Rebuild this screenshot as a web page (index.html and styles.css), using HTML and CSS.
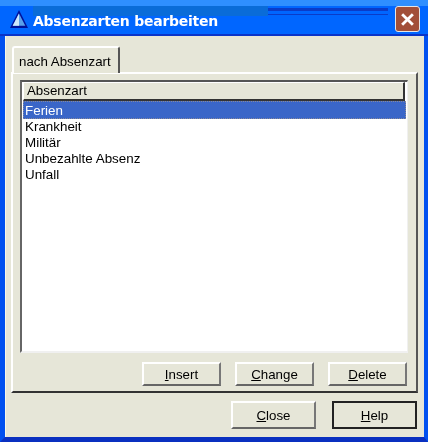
FILE: index.html
```html
<!DOCTYPE html>
<html lang="de">
<head>
<meta charset="utf-8">
<title>Absenzarten bearbeiten</title>
<link rel="stylesheet" href="styles.css">
</head>
<body>
<div class="window">
  <header class="titlebar">
    <svg class="app-icon" viewBox="0 0 20 20" width="18" height="18" aria-hidden="true">
      <path d="M10 0 L20 20 L0 20 Z" fill="#00109a"/>
      <path d="M10 4 L17 17.5 L3 17.5 Z" fill="#5aa0ea"/>
      <path d="M10 4 L10 17.5 L3 17.5 Z" fill="#cfe8fb"/>
    </svg>
    <span class="title">Absenzarten bearbeiten</span>
    <button class="close-x" aria-label="Schliessen">
      <svg viewBox="0 0 14 14" width="15" height="15" aria-hidden="true">
        <path d="M2 2 L12 12 M12 2 L2 12" stroke="#fff" stroke-width="2.6" fill="none"/>
      </svg>
    </button>
  </header>
  <main class="client">
    <div class="tabs"><div class="tab">nach Absenzart</div></div>
    <section class="panel">
      <div class="list">
        <div class="list-head">Absenzart</div>
        <ul class="rows">
          <li class="row selected"><span>Ferien</span></li>
          <li class="row"><span>Krankheit</span></li>
          <li class="row"><span>Militär</span></li>
          <li class="row"><span>Unbezahlte Absenz</span></li>
          <li class="row"><span>Unfall</span></li>
        </ul>
      </div>
      <div class="panel-actions">
        <button class="btn small"><u>I</u>nsert</button>
        <button class="btn small"><u>C</u>hange</button>
        <button class="btn small"><u>D</u>elete</button>
      </div>
    </section>
    <div class="dialog-actions">
      <button class="btn large"><u>C</u>lose</button>
      <button class="btn large default"><u>H</u>elp</button>
    </div>
  </main>
</div>
</body>
</html>
```
FILE: styles.css
```css
* { box-sizing: border-box; }
html, body { margin: 0; padding: 0; }
body { width: 428px; height: 442px; overflow: hidden; background: #0446e6; font-family: "Liberation Sans", Arial, sans-serif; }
.window {
  width: 428px; height: 442px; display: flex; flex-direction: column;
  background: #0066ff;
  border-left: 5px solid #0050f0; border-right: 4px solid #0050f0; border-bottom: 5px solid #0a30c0;
  filter: blur(0.35px);
}
.titlebar {
  height: 36px; flex: none; display: flex; align-items: center;
  margin: 0 -4px 0 -5px; padding: 0 8px 0 10px;
  background:
    linear-gradient(#0a3cc8, #0a3cc8) no-repeat 268px 8px / 120px 3px,
    linear-gradient(#0a3cc8, #0a3cc8) no-repeat 268px 14px / 120px 1px,
    linear-gradient(#0a6cd8, #0a6cd8) no-repeat 33px 6px / 235px 10px,
    linear-gradient(180deg, #2f8fff 0, #2f8fff 6px, #0066ff 6px, #0066ff 34px, #0a34c8 34px, #0a34c8 36px);
}
.app-icon { flex: none; margin-top: 1px; margin-right: 5px; }
.title { flex: 1; color: #fff; font: bold 14px "DejaVu Sans", sans-serif; letter-spacing: -0.25px; margin-top: 6px; }
.close-x {
  width: 25px; height: 26px; padding: 0; margin-top: 2px; display: flex; align-items: center; justify-content: center;
  background: #a24f38; border: 1px solid #e6e6e6; border-radius: 3px;
}
.client {
  flex: 1; display: flex; flex-direction: column; background: #e6e6d8;
  padding: 10px 6px 8px 5px; border-left: 1px solid #f8f8e8;
}
.tabs { height: 26px; padding-left: 1px; display: flex; flex: none; }
.tab {
  width: 108px; height: 27px; padding: 6px 0 0 5px; font-size: 13.3px; color: #000;
  background: #e6e6d8; position: relative; z-index: 1;
  border-top: 2px solid #fff; border-left: 2px solid #fff; border-right: 2px solid #555; border-radius: 3px 3px 0 0;
}
.panel {
  height: 321px; flex: none; display: flex; flex-direction: column; padding: 6px 8px 0 7px;
  border-top: 2px solid #fff; border-left: 2px solid #fff; border-right: 2px solid #555; border-bottom: 2px solid #333;
}
.list {
  height: 273px; flex: none; background: #fff; padding: 0 1px;
  border-top: 2px solid #555; border-left: 2px solid #666; border-right: 1px solid #f0f0f0; border-bottom: 2px solid #f0f0f0;
}
.list-head {
  height: 19px; margin-right: 1px; padding-left: 3px; font-size: 13.3px; line-height: 16px; color: #000; background: #e6e6d8;
  border-top: 1px solid #fff; border-left: 1px solid #fff; border-right: 2px solid #333; border-bottom: 2px solid #333;
}
.rows { list-style: none; margin: 0; padding: 0; }
.row { height: 16px; font-size: 13.4px; line-height: 16px; color: #000; padding-left: 2px; }
.selected { height: 18px; line-height: 19px; background: #3a66c8; color: #fff; outline: 1px dotted #8a8a98; outline-offset: -1px; }
.panel-actions { display: flex; justify-content: flex-end; gap: 14px; margin-top: 9px; padding-right: 1px; }
.btn {
  padding: 0; font: 13.3px "Liberation Sans", Arial, sans-serif; color: #000; background: #e6e6d8;
  border-top: 2px solid #fff; border-left: 2px solid #fff; border-right: 2px solid #777; border-bottom: 2px solid #666;
}
.small { width: 79px; height: 24px; }
.large { width: 85px; height: 28px; }
.default { border: 2px solid #222; }
.dialog-actions { display: flex; justify-content: flex-end; gap: 16px; margin-top: 8px; padding-right: 1px; }
```
